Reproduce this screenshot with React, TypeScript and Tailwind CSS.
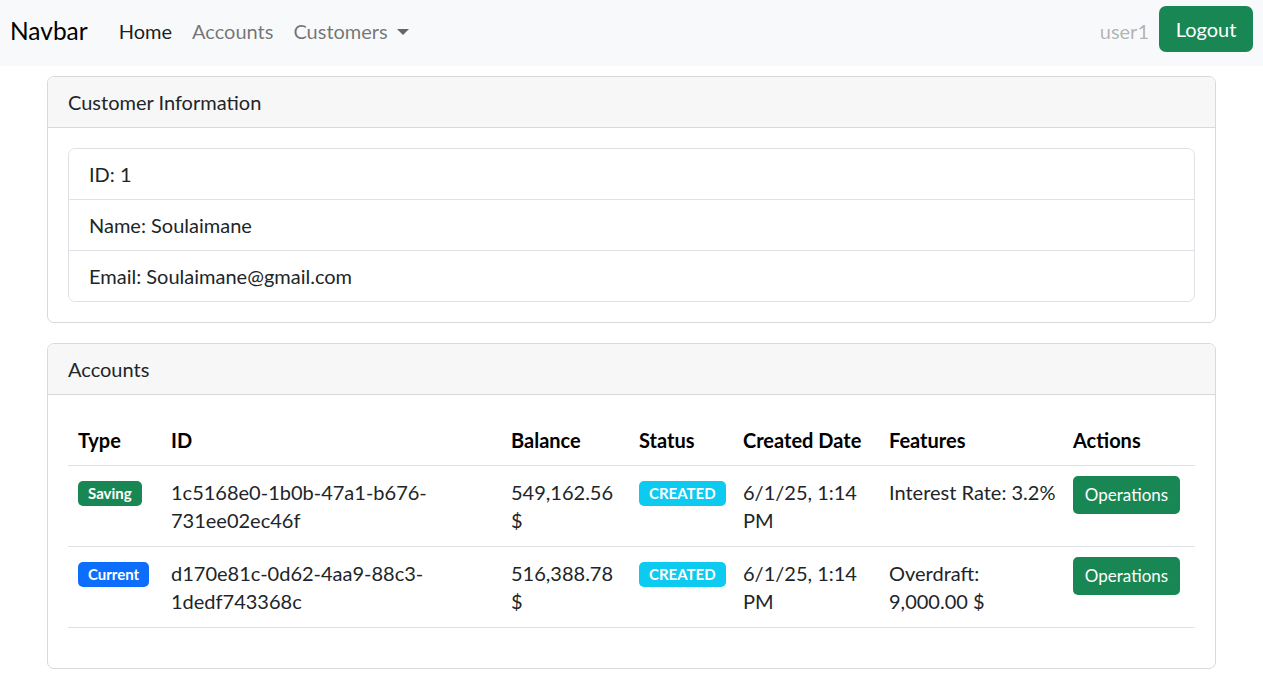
import React from "react";

const font = { fontFamily: "Lato, 'Noto Sans', sans-serif" };

function Badge({ children, color }: { children: React.ReactNode; color: string }) {
  return (
    <span
      className={`inline-flex h-[25px] items-center rounded-[5px] px-[10px] text-[15px] font-bold leading-none text-white ${color}`}
    >
      {children}
    </span>
  );
}

function OpButton() {
  return (
    <button className="h-[38px] w-[107px] rounded-[5px] bg-[#198754] text-[17px] text-white">
      Operations
    </button>
  );
}

const cols = "grid grid-cols-[93px_340px_128px_104px_146px_184px_132px]";

function Row({
  badge,
  id1,
  id2,
  bal,
  f1,
  f2,
}: {
  badge: React.ReactNode;
  id1: string;
  id2: string;
  bal: string;
  f1: string;
  f2?: string;
}) {
  const cell = "px-[10px] pt-[12px] leading-[28px] whitespace-nowrap";
  return (
    <div className={`${cols} h-[81px] border-b border-[#dee2e6] text-[20px] text-[#212529]`}>
      <div className="flex items-start px-[10px] pt-[15px]">{badge}</div>
      <div className={cell}>
        {id1}
        <br />
        {id2}
      </div>
      <div className={cell}>
        {bal}
        <br />$
      </div>
      <div className="flex items-start px-[10px] pt-[15px]">
        <Badge color="bg-[#0dcaf0]">CREATED</Badge>
      </div>
      <div className={cell}>
        6/1/25, 1:14
        <br />
        PM
      </div>
      <div className={cell}>
        {f1}
        {f2 && (
          <>
            <br />
            {f2}
          </>
        )}
      </div>
      <div className="flex items-start px-[10px] pt-[10px]">
        <OpButton />
      </div>
    </div>
  );
}

export default function App() {
  return (
    <div className="min-h-[673px] bg-white text-[#212529]" style={font}>
      <nav className="flex h-[66px] items-center bg-[#f8f9fa] pb-[4px] pl-[10px] pr-[10px]">
        <span className="mr-[31px] text-[24.5px] leading-none text-black">Navbar</span>
        <span className="mr-[20px] text-[20px] text-black/90">Home</span>
        <span className="mr-[20px] text-[20px] text-black/55">Accounts</span>
        <span className="flex items-center text-[20px] text-black/55">
          Customers
          <span className="ml-[9px] mt-[1px] h-0 w-0 border-x-[6px] border-t-[6px] border-x-transparent border-t-[#666]" />
        </span>
        <div className="ml-auto flex items-center gap-[10px]">
          <span className="text-[20px] text-black/30">user1</span>
          <button className="mb-[5px] h-[46px] w-[94px] rounded-[7px] bg-[#198754] text-[20px] text-white">
            Logout
          </button>
        </div>
      </nav>

      <div className="mx-[47px] mt-[10px]">
        <div className="overflow-hidden rounded-[7px] border border-[#d9d9d9]">
          <div className="flex h-[51px] items-center border-b border-[#d9d9d9] bg-[#f7f7f7] px-[20px] text-[20px]">
            Customer Information
          </div>
          <div className="p-[20px]">
            <div className="rounded-[7px] border border-[#dee2e6] text-[20px]">
              <div className="flex h-[51px] items-center border-b border-[#dee2e6] px-[20px]">ID: 1</div>
              <div className="flex h-[51px] items-center border-b border-[#dee2e6] px-[20px]">
                Name: Soulaimane
              </div>
              <div className="flex h-[50px] items-center px-[20px]">Email: Soulaimane@gmail.com</div>
            </div>
          </div>
        </div>

        <div className="mt-[20px] overflow-hidden rounded-[7px] border border-[#d9d9d9]">
          <div className="flex h-[51px] items-center border-b border-[#d9d9d9] bg-[#f7f7f7] px-[20px] text-[20px]">
            Accounts
          </div>
          <div className="px-[20px] pb-[40px] pt-[20px]">
            <div className={`${cols} h-[51px] border-b border-[#dee2e6] text-[20px] font-bold text-black`}>
              {["Type", "ID", "Balance", "Status", "Created Date", "Features", "Actions"].map((h) => (
                <div key={h} className="whitespace-nowrap px-[10px] pt-[11px] leading-[28px]">
                  {h}
                </div>
              ))}
            </div>
            <Row
              badge={<Badge color="bg-[#198754]">Saving</Badge>}
              id1="1c5168e0-1b0b-47a1-b676-"
              id2="731ee02ec46f"
              bal="549,162.56"
              f1="Interest Rate: 3.2%"
            />
            <Row
              badge={<Badge color="bg-[#0d6efd]">Current</Badge>}
              id1="d170e81c-0d62-4aa9-88c3-"
              id2="1dedf743368c"
              bal="516,388.78"
              f1="Overdraft:"
              f2="9,000.00 $"
            />
          </div>
        </div>
      </div>
    </div>
  );
}
